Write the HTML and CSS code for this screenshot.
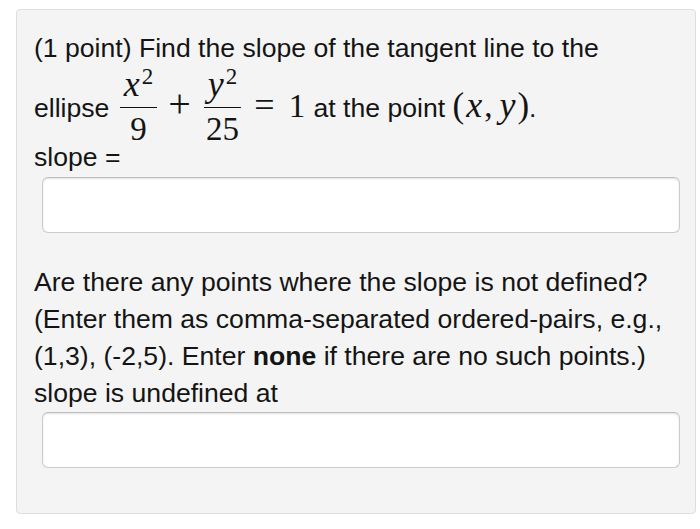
FILE: index.html
```html
<!DOCTYPE html>
<html lang="en">
<head>
<meta charset="utf-8">
<title>Slope of tangent line</title>
<link rel="stylesheet" href="styles.css">
</head>
<body>
<div class="panel">
  <p class="text first">(1 point) Find the slope of the tangent line to the<br>ellipse <span class="math"><span class="frac"><span class="num"><i class="mi">x</i><span class="sup">2</span></span><span class="den">9</span></span><span class="op plus">+</span><span class="frac"><span class="num"><i class="mi">y</i><span class="sup">2</span></span><span class="den">25</span></span><span class="op eq">=</span><span class="mn">1</span></span> at the point <span class="math paren"><span class="pa">(</span><i class="mi mx">x</i>,<i class="mi my">y</i><span class="pa">)</span></span>.<br>slope =</p>
  <div class="answer first-answer"><input type="text" aria-label="slope"></div>
  <p class="text second">Are there any points where the slope is not defined? (Enter them as comma-separated ordered-pairs, e.g., (1,3), (-2,5). Enter <b>none</b> if there are no such points.)<br>slope is undefined at</p>
  <div class="answer second-answer"><input type="text" aria-label="slope is undefined at"></div>
</div>
</body>
</html>
```
FILE: styles.css
```css
html, body {
  margin: 0;
  padding: 0;
  background: #ffffff;
}

.panel {
  box-sizing: border-box;
  width: 680px;
  margin: 9px 0 0 16px;
  padding: 20px 15px 45px 17px;
  background: #f4f4f4;
  border: 1px solid #dedede;
  border-radius: 4px;
  font-family: "Liberation Sans", Arial, Helvetica, sans-serif;
  font-size: 26.6px;
  line-height: 36px;
  color: #141414;
}

.text {
  margin: 0;
}

.second {
  margin-top: 31px;
  line-height: 37px;
}

.text b {
  font-weight: bold;
}

.math {
  font-family: "Liberation Serif", "Times New Roman", serif;
  font-size: 33px;
  white-space: nowrap;
}

.mi {
  font-style: italic;
  font-size: 36px;
}

.frac {
  display: inline-flex;
  flex-direction: column;
  align-items: stretch;
  vertical-align: 21px;
  margin: 0 2px 0 3px;
  text-align: center;
}

.num {
  display: block;
  line-height: 20px;
  padding: 8px 4px 12px 4px;
  border-bottom: 1px solid #111;
}

.den {
  display: block;
  line-height: 20px;
  padding: 11px 2px 0 2px;
}

.sup {
  font-size: 23px;
  line-height: 0;
  vertical-align: 12px;
  margin-left: 2px;
}

.op {
  line-height: 0;
}

.plus {
  font-size: 40px;
  margin: 0 10px 0 9px;
}

.eq {
  font-size: 36px;
  margin: 0 14px 0 11px;
}

.mn {
  margin-right: 1px;
}

.paren {
  margin-left: 0;
}

.pa {
  font-size: 35px;
}

.mx {
  margin: 0 2px 0 2px;
}

.my {
  margin: 0 2px 0 7px;
}

.answer {
  padding-left: 8px;
}

.first-answer {
  margin-top: 2px;
}

.second-answer {
  margin-top: 0;
}

.answer input {
  display: block;
  box-sizing: border-box;
  width: 100%;
  height: 56px;
  margin: 0;
  padding: 0 10px;
  background: #ffffff;
  border: 1px solid #cbcbcb;
  border-top-color: #bdbdbd;
  border-radius: 6px;
  box-shadow: inset 0 1px 2px rgba(0, 0, 0, 0.12);
  font-family: "Liberation Sans", Arial, sans-serif;
  font-size: 22px;
  outline: none;
}
```
